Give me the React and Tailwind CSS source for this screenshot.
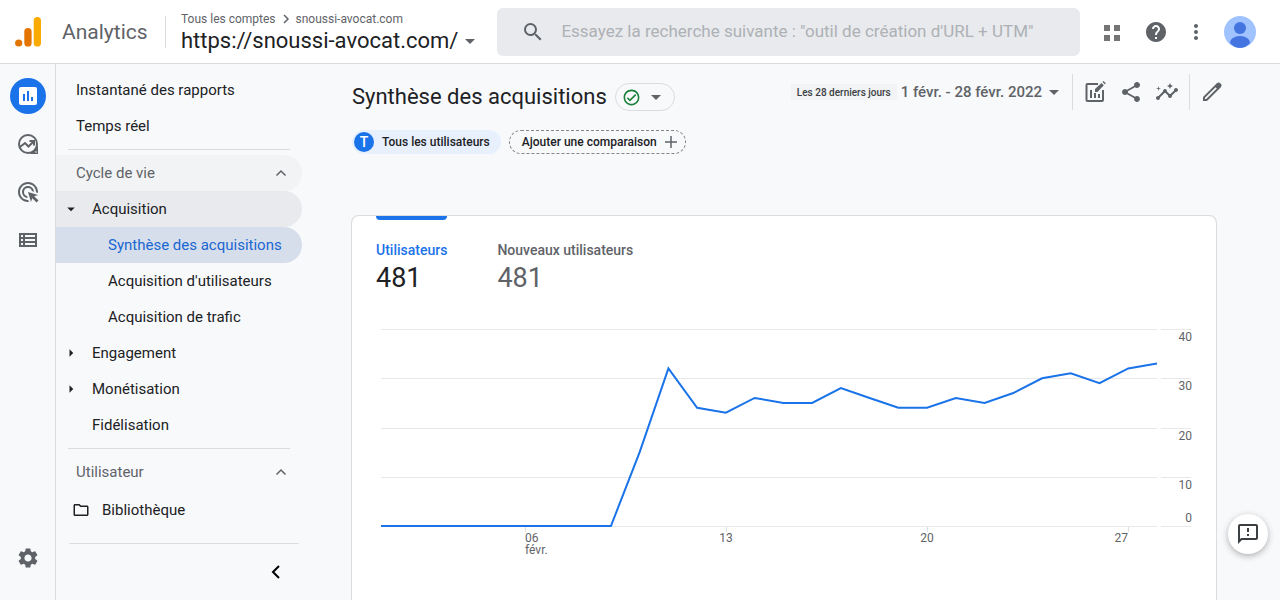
import React from 'react';
import {
  MdAdsClick,
  MdArrowDropDown,
  MdArrowRight,
  MdHelp,
  MdInsights,
  MdMoreVert,
  MdOutlineCheckCircle,
  MdOutlineFeedback,
  MdOutlineFolder,
  MdSearch,
  MdSettings,
  MdShare,
} from 'react-icons/md';

const visitors = [0, 0, 0, 0, 0, 0, 0, 0, 0, 15, 32, 24, 23, 26, 25, 25, 28, 26, 24, 24, 26, 25, 27, 30, 31, 29, 32, 33];

const yTicks = [
  { label: '40', y: 9, textY: 21 },
  { label: '30', y: 58, textY: 70 },
  { label: '20', y: 108, textY: 120 },
  { label: '10', y: 157, textY: 169 },
  { label: '0', y: 206, textY: 202 },
];

const xTicks = [
  { label: '06', x: 149, anchor: 'start', sub: 'févr.' },
  { label: '13', x: 350, anchor: 'middle' },
  { label: '20', x: 551, anchor: 'middle' },
  { label: '27', x: 752, anchor: 'end' },
];

const Logo = () => (
  <svg className="w-7 h-8" viewBox="0 0 28 32" aria-hidden="true">
    <rect x="19.700" y="1" width="7.300" height="29.500" rx="3.600" fill="#f9ab00" />
    <rect x="10.300" y="12" width="7.300" height="18.500" rx="3.600" fill="#e37400" />
    <circle cx="4.700" cy="27" r="3.600" fill="#e37400" />
  </svg>
);

const ReportsIcon = () => (
  <svg className="w-6 h-6" viewBox="0 0 24 24" fill="currentColor" aria-hidden="true">
    <path
      fillRule="evenodd"
      d="M5 3h14a2 2 0 0 1 2 2v14a2 2 0 0 1-2 2H5a2 2 0 0 1-2-2V5a2 2 0 0 1 2-2zm2 7v7h2v-7H7zm4-3v10h2V7h-2zm4 6v4h2v-4h-2z"
    />
  </svg>
);

const ExploreIcon = () => (
  <svg className="w-6 h-6" viewBox="0 0 24 24" fill="none" stroke="currentColor" strokeWidth="2" aria-hidden="true">
    <circle cx="12" cy="12" r="9" />
    <path d="M4 15l5-4 3.500 3.500L17 10" />
    <path d="M13.500 9H18v4.500" />
    <path d="M22 12v10H12c4-.5 9.500-5 10-10z" fill="currentColor" stroke="none" />
    <circle cx="20" cy="20" r=".8" fill="#f8f9fb" stroke="none" />
  </svg>
);

const ListIcon = () => (
  <svg className="w-6 h-6" viewBox="0 0 24 24" fill="currentColor" aria-hidden="true">
    <path fillRule="evenodd" d="M3 5h18v14H3V5zm2 2v2h2V7H5zm4 0v2h10V7H9zm-4 4v2h2v-2H5zm4 0v2h10v-2H9zm-4 4v2h2v-2H5zm4 0v2h10v-2H9z" />
  </svg>
);

const CustomizeIcon = () => (
  <svg className="w-6 h-6" viewBox="0 0 24 24" fill="none" stroke="currentColor" strokeWidth="2" aria-hidden="true">
    <path d="M15 4H4.500a1 1 0 0 0-1 1v15a1 1 0 0 0 1 1H19a1 1 0 0 0 1-1V10" />
    <path d="M8 10v8M12 13v5M16 14v4" />
    <path d="M12 12v-3L18.500 3l2.300 2.300L14.500 12z" fill="currentColor" stroke="none" />
    <path d="M19.500 2l1-1 2.300 2.300-1 1z" fill="currentColor" stroke="none" />
  </svg>
);

const PencilIcon = () => (
  <svg className="w-6 h-6" viewBox="0 0 24 24" fill="currentColor" aria-hidden="true">
    <path
      fillRule="evenodd"
      d="M3 17L16.600 3.400a2.600 2.600 0 0 1 3.800 0l.2.200a2.600 2.600 0 0 1 0 3.800L7 21H3v-4zm2 .8V19h1.200L16.800 8.400l-1.200-1.200L5 17.800z"
    />
  </svg>
);

const AppsIcon = () => (
  <svg className="w-6 h-6" viewBox="0 0 24 24" fill="#757575" aria-hidden="true">
    <path d="M4 5h6v6H4zM14 5h6v6h-6zM4 15h6v6H4zM14 15h6v6h-6z" />
  </svg>
);

const Avatar = () => (
  <svg className="w-8 h-8 rounded-full" viewBox="0 0 32 32" aria-hidden="true">
    <rect width="32" height="32" fill="#a0c3ff" />
    <circle cx="16" cy="12" r="6" fill="#4374e0" />
    <path d="M6 27c0-4 4.500-7 10-7s10 3 10 7c-2.500 3-6 5-10 5s-7.500-2-10-5z" fill="#4374e0" />
  </svg>
);

const Chevron = () => (
  <svg className="w-3 h-3" viewBox="0 0 12 12" fill="none" stroke="currentColor" strokeWidth="1.500" aria-hidden="true">
    <path d="M1.500 8.500L6 4l4.500 4.500" />
  </svg>
);

const Header = () => (
  <header className="h-16 shrink-0 bg-white border-b border-[#dadce0] flex items-center pl-3.5 pr-6 pt-px">
    <a href="#accueil" className="flex items-center gap-5 text-[#5f6368]">
      <Logo />
      <span className="w-[87px] text-[21px] leading-8 whitespace-nowrap">Analytics</span>
    </a>
    <div className="ml-4 pl-[15px] border-l border-[#dadce0] h-8 flex flex-col justify-center">
      <div className="pt-0.5 flex items-center gap-1.5 text-xs leading-4 text-[#5f6368] whitespace-nowrap">
        <a href="#comptes">Tous les comptes</a>
        <svg className="w-2 h-3" viewBox="0 0 8 12" fill="none" stroke="currentColor" strokeWidth="1.500" aria-hidden="true">
          <path d="M2 2l4 4-4 4" />
        </svg>
        <a href="#compte">snoussi-avocat.com</a>
      </div>
      <button className="flex items-center text-[22px] leading-7 text-[#202124] whitespace-nowrap">
        https://snoussi-avocat.com/
        <MdArrowDropDown className="w-6 h-6 text-[#5f6368]" />
      </button>
    </div>
    <label className="ml-[15px] flex-1 h-12 bg-[#e8eaed] rounded-md flex items-center pl-6 gap-4 text-[#5f6368]">
      <MdSearch className="w-6 h-6" />
      <input
        type="text"
        aria-label="Rechercher"
        className="flex-1 bg-transparent outline-none text-[17px] placeholder:text-[#aeb1b5]"
        placeholder={'Essayez la recherche suivante : "outil de création d\'URL + UTM"'}
      />
    </label>
    <div className="ml-5 flex items-center gap-4 text-[#5f6368]">
      <button aria-label="Applications" className="mr-1"><AppsIcon /></button>
      <button aria-label="Aide"><MdHelp className="w-6 h-6" /></button>
      <button aria-label="Plus"><MdMoreVert className="w-6 h-6" /></button>
      <button aria-label="Compte"><Avatar /></button>
    </div>
  </header>
);

const Rail = () => (
  <nav aria-label="Sections" className="w-14 shrink-0 border-r border-[#dadce0] flex flex-col items-center pt-3.5 pb-[30px] text-[#5f6368]">
    <a href="#rapports" aria-label="Rapports" className="w-9 h-9 rounded-full bg-[#1a73e8] text-white flex items-center justify-center">
      <ReportsIcon />
    </a>
    <a href="#explorer" aria-label="Explorer" className="mt-4.5"><ExploreIcon /></a>
    <a href="#publicite" aria-label="Publicité" className="mt-6"><MdAdsClick className="w-6 h-6" /></a>
    <a href="#configurer" aria-label="Configurer" className="mt-6"><ListIcon /></a>
    <a href="#admin" aria-label="Administration" className="mt-auto"><MdSettings className="w-6 h-6" /></a>
  </nav>
);

const Sidebar = () => (
  <nav aria-label="Rapports" className="w-[246px] shrink-0 pt-2 flex flex-col text-[15px] text-[#202124] whitespace-nowrap">
    <a href="#instantane" className="h-9 pl-5 flex items-center">Instantané des rapports</a>
    <a href="#temps-reel" className="h-9 pl-5 flex items-center">Temps réel</a>
    <hr className="my-[5px] mx-3 border-[#dadce0]" />
    <button className="h-9 pl-5 pr-[15px] flex items-center justify-between bg-[#f1f3f4] rounded-r-full text-[#5f6368]">
      Cycle de vie
      <Chevron />
    </button>
    <button className="h-9 pl-1.5 flex items-center gap-3 bg-[#e8eaed] rounded-r-full">
      <MdArrowDropDown className="w-[18px] h-[18px]" />
      Acquisition
    </button>
    <a href="#synthese" className="h-9 pl-13 flex items-center bg-[#d7deeb] rounded-r-full text-[#1967d2]">Synthèse des acquisitions</a>
    <a href="#utilisateurs" className="h-9 pl-13 flex items-center">Acquisition d'utilisateurs</a>
    <a href="#trafic" className="h-9 pl-13 flex items-center">Acquisition de trafic</a>
    <button className="h-9 pl-1.5 flex items-center gap-3">
      <MdArrowRight className="w-[18px] h-[18px]" />
      Engagement
    </button>
    <button className="h-9 pl-1.5 flex items-center gap-3">
      <MdArrowRight className="w-[18px] h-[18px]" />
      Monétisation
    </button>
    <a href="#fidelisation" className="h-9 pl-9 flex items-center">Fidélisation</a>
    <hr className="my-[5px] mx-3 border-[#dadce0]" />
    <button className="h-9 pl-5 pr-[15px] flex items-center justify-between text-[#5f6368]">
      Utilisateur
      <Chevron />
    </button>
    <a href="#bibliotheque" className="mt-0.5 h-9 pl-4 flex items-center gap-3">
      <MdOutlineFolder className="w-[18px] h-[18px]" />
      Bibliothèque
    </a>
    <div className="mt-auto ml-[13px] mr-[3px] h-[57px] border-t border-[#dadce0] flex items-center justify-end pr-[17px]">
      <button aria-label="Réduire">
        <svg className="w-3 h-4" viewBox="0 0 12 16" fill="none" stroke="#000" strokeWidth="2" aria-hidden="true">
          <path d="M9 2L3 8l6 6" />
        </svg>
      </button>
    </div>
  </nav>
);

const Chart = () => {
  const points = visitors.map((v, i) => `${5 + (i * 776) / 27},${206 - v * 4.925}`).join(' ');

  return (
    <svg className="mt-6 w-full h-auto" viewBox="0 0 816 250" role="img" aria-label="Utilisateurs par jour" fontSize="12" fill="#5f6368">
      {yTicks.map((t) => (
        <g key={t.label}>
          <path d={`M5 ${t.y}.5H781M785 ${t.y}.5H815`} stroke="#e8e8e8" />
          <text x="816" y={t.textY} textAnchor="end">{t.label}</text>
        </g>
      ))}
      {xTicks.map((t) => (
        <g key={t.label}>
          <path d={`M${t.x}.5 207v5`} stroke="#e0e0e0" />
          <text x={t.x} y="222" textAnchor={t.anchor}>{t.label}</text>
          {t.sub && <text x={t.x} y="234">{t.sub}</text>}
        </g>
      ))}
      <polyline points={points} fill="none" stroke="#1a73e8" strokeWidth="2" />
    </svg>
  );
};

const Report = () => (
  <main className="flex-1 min-w-0 pl-[49px] pr-[63px] flex flex-col">
    <div className="h-[66px] shrink-0 flex items-center pl-px whitespace-nowrap">
      <h1 className="text-[22px] leading-8 text-[#202124]">Synthèse des acquisitions</h1>
      <button aria-label="État des données" className="ml-2 w-15 h-7 border border-[#dadce0] rounded-full flex items-center justify-between px-1.5 text-[#5f6368]">
        <MdOutlineCheckCircle className="w-[19px] h-[19px] text-[#188038]" />
        <MdArrowDropDown className="w-6 h-6" />
      </button>
      <div className="ml-auto -mr-[7px] mb-2.5 flex items-center text-[#5f6368]">
        <span className="bg-[#f1f3f4] px-1.5 h-4 flex items-center text-[10px] font-medium text-[#3c4043]">Les 28 derniers jours</span>
        <button className="ml-1 flex items-center text-[15px] font-medium">
          1 févr. - 28 févr. 2022
          <MdArrowDropDown className="w-6 h-6" />
        </button>
        <div className="ml-1.5 h-9 px-2.5 border-x border-[#dadce0] flex items-center gap-3">
          <button aria-label="Personnaliser le rapport"><CustomizeIcon /></button>
          <button aria-label="Partager"><MdShare className="w-6 h-6" /></button>
          <button aria-label="Insights"><MdInsights className="w-6 h-6" /></button>
        </div>
        <button aria-label="Modifier" className="ml-2.5"><PencilIcon /></button>
      </div>
    </div>

    <div className="flex items-center gap-2 pl-px text-xs font-medium text-[#202124] whitespace-nowrap">
      <button className="h-6 bg-[#e8f0fe] rounded-full flex items-center gap-2 pl-0.5 pr-[11px]">
        <span className="w-5 h-5 rounded-full bg-[#1a73e8] text-white text-sm flex items-center justify-center">T</span>
        Tous les utilisateurs
      </button>
      <button className="h-6 border border-dashed border-[#80868b] rounded-full flex items-center gap-2 pl-3 pr-2">
        Ajouter une comparaison
        <svg className="w-3 h-3" viewBox="0 0 12 12" stroke="#5f6368" strokeWidth="1.500" aria-hidden="true">
          <path d="M6 0v12M0 6h12" />
        </svg>
      </button>
    </div>

    <section className="mt-[61px] flex-1 bg-white border border-b-0 border-[#dadce0] rounded-t-lg px-6">
      <div role="tablist" className="flex gap-[50px] whitespace-nowrap">
        <button role="tab" aria-selected="true" className="text-left flex flex-col">
          <span className="w-full h-1 bg-[#1a73e8] rounded-b" />
          <span className="mt-5 text-sm leading-5 font-medium text-[#1a73e8]">Utilisateurs</span>
          <span className="text-[27px] leading-9 text-[#202124]">481</span>
        </button>
        <button role="tab" aria-selected="false" className="pt-6 text-left flex flex-col text-[#5f6368]">
          <span className="text-sm leading-5 font-medium">Nouveaux utilisateurs</span>
          <span className="text-[27px] leading-9">481</span>
        </button>
      </div>
      <Chart />
    </section>
  </main>
);

const App = () => {
  return (
    <div className="h-screen overflow-hidden flex flex-col bg-[#f8f9fb] font-['Roboto','Liberation_Sans',sans-serif]">
      <Header />
      <div className="flex-1 min-h-0 flex">
        <Rail />
        <Sidebar />
        <Report />
      </div>
      <button
        aria-label="Envoyer un commentaire"
        className="fixed right-3 bottom-[46px] w-10 h-10 rounded-full bg-white shadow-[0_2px_6px_rgba(60,64,67,0.4)] flex items-center justify-center text-[#3c4043]"
      >
        <MdOutlineFeedback className="w-6 h-6" />
      </button>
    </div>
  );
};

export default App;
